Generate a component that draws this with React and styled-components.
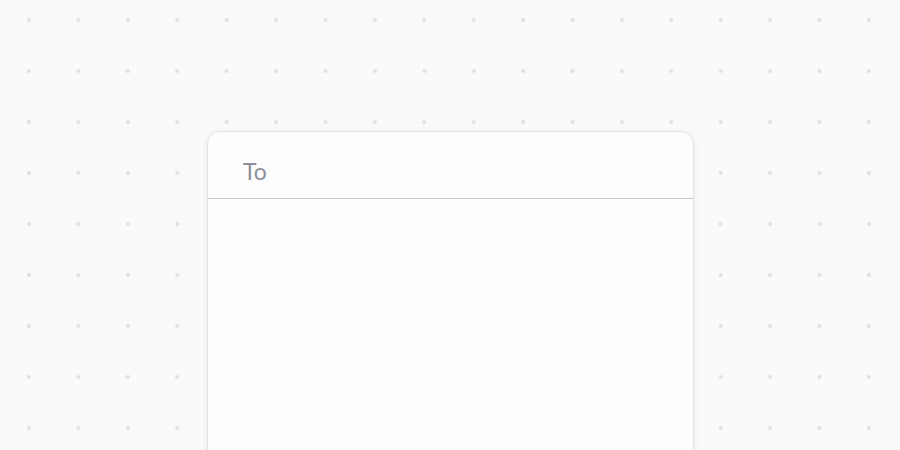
import React from "react";
import styled, { createGlobalStyle } from "styled-components";

const Global = createGlobalStyle`
  html, body { margin: 0; padding: 0; }
  body {
    background-color: #fafafa;
    font-family: "Lato", "Noto Sans", sans-serif;
  }
`;

const Canvas = styled.div`
  width: 900px;
  height: 450px;
  overflow: hidden;
  box-sizing: border-box;
  padding-top: 131px;
  display: flex;
  justify-content: center;
  background-color: #fafafa;
  background-image: radial-gradient(circle, #dfdfe2 0 1.4px, rgba(223, 223, 226, 0.4) 2px, transparent 2.6px);
  background-size: 49.41px 51px;
  background-position: 4.3px -5.5px;
`;

const Card = styled.div`
  width: 487px;
  margin-left: 1px;
  height: 360px;
  flex-shrink: 0;
  box-sizing: border-box;
  background: #fdfdfd;
  border: 1px solid #e3e3e7;
  border-radius: 13px;
  box-shadow: 0 1px 6px rgba(120, 120, 140, 0.12);
  display: flex;
  flex-direction: column;
`;

const Header = styled.div`
  height: 67px;
  box-sizing: border-box;
  display: flex;
  align-items: center;
  padding: 0 35px;
  border-bottom: 1px solid #c6c7cc;
`;

const Label = styled.span`
  font-size: 23px;
  color: #8c8f98;
  font-weight: 400;
  margin-top: 12px;
`;

const Body = styled.div`
  flex: 1;
`;

export default function App() {
  return (
    <>
      <Global />
      <Canvas>
        <Card>
          <Header>
            <Label>To</Label>
          </Header>
          <Body />
        </Card>
      </Canvas>
    </>
  );
}
